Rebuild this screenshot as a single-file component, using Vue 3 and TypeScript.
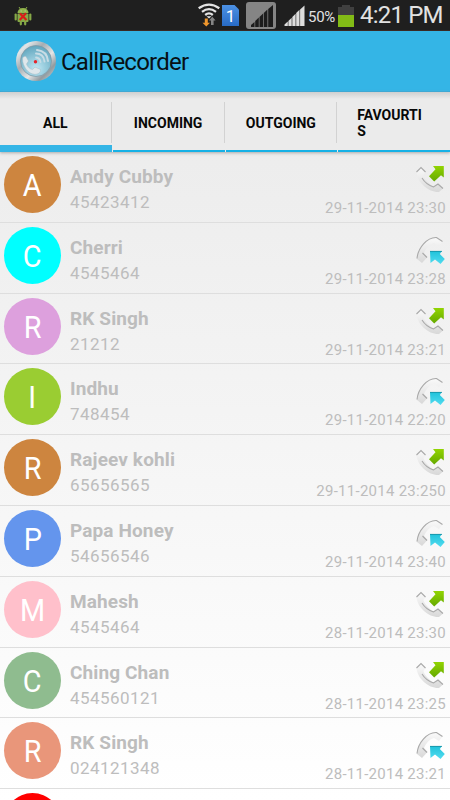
<script setup lang="ts">
interface Call {
  name: string
  phone: string
  date: string
  color: string
  outgoing: boolean
}

const tabs: string[] = ['ALL', 'INCOMING', 'OUTGOING', 'FAVOURTIS']

const calls: Call[] = [
  { name: 'Andy Cubby', phone: '45423412', date: '29-11-2014 23:30', color: '#cd853f', outgoing: true },
  { name: 'Cherri', phone: '4545464', date: '29-11-2014 23:28', color: '#00ffff', outgoing: false },
  { name: 'RK Singh', phone: '21212', date: '29-11-2014 23:21', color: '#dda0dd', outgoing: true },
  { name: 'Indhu', phone: '748454', date: '29-11-2014 22:20', color: '#9acd32', outgoing: false },
  { name: 'Rajeev kohli', phone: '65656565', date: '29-11-2014 23:250', color: '#cd853f', outgoing: true },
  { name: 'Papa Honey', phone: '54656546', date: '29-11-2014 23:40', color: '#6495ed', outgoing: false },
  { name: 'Mahesh', phone: '4545464', date: '28-11-2014 23:30', color: '#ffc0cb', outgoing: true },
  { name: 'Ching Chan', phone: '454560121', date: '28-11-2014 23:25', color: '#8fbc8f', outgoing: true },
  { name: 'RK Singh', phone: '024121348', date: '28-11-2014 23:21', color: '#e9967a', outgoing: false },
  { name: '', phone: '', date: '', color: '#ff0000', outgoing: true },
]
</script>

<template>
  <div class="screen">
    <svg width="0" height="0" class="defs">
      <defs>
        <linearGradient id="metal" x1="0" y1="0" x2="1" y2="1">
          <stop offset="0" stop-color="#85929a" /><stop offset=".18" stop-color="#e2e6e8" />
          <stop offset=".38" stop-color="#a5adb2" /><stop offset=".6" stop-color="#e5e5e5" />
          <stop offset=".78" stop-color="#919ba0" /><stop offset="1" stop-color="#dde1e3" />
        </linearGradient>
        <radialGradient id="glass" cx=".5" cy=".75" r=".75">
          <stop offset="0" stop-color="#c0e8f4" /><stop offset="1" stop-color="#60a5bd" />
        </radialGradient>
        <linearGradient id="phone" x1="0" y1="0" x2="0" y2="1">
          <stop offset="0" stop-color="#fafafa" /><stop offset="1" stop-color="#d8d8d8" />
        </linearGradient>
        <linearGradient id="green" x1="0" y1="0" x2="0" y2="1">
          <stop offset="0" stop-color="#92d402" /><stop offset="1" stop-color="#65a900" />
        </linearGradient>
        <linearGradient id="cyan" x1="0" y1="0" x2="0" y2="1">
          <stop offset="0" stop-color="#20c2da" /><stop offset="1" stop-color="#52dcf0" />
        </linearGradient>
        <linearGradient id="sim" x1="0" y1="0" x2="0" y2="1">
          <stop offset="0" stop-color="#4c91e4" /><stop offset="1" stop-color="#286bc5" />
        </linearGradient>
      </defs>
    </svg>

    <div class="status">
      <svg class="droid" width="18" height="20" viewBox="0 0 18 20">
        <path d="M5 1l2 3M13 1l-2 3" stroke="#86a948" stroke-width="1" />
        <path d="M3.5 7a5.5 5 0 0 1 11 0z" fill="#91b34c" />
        <rect x="3.5" y="7.5" width="11" height="8.5" rx="1" fill="#86a947" />
        <rect x=".6" y="7.5" width="2.2" height="7" rx="1.1" fill="#86a947" />
        <rect x="15.2" y="7.5" width="2.2" height="7" rx="1.1" fill="#86a947" />
        <path d="M6.8 15v3.3M11.2 15v3.3" stroke="#86a947" stroke-width="2.2" stroke-linecap="round" />
        <path d="M6.8 5h.6M10.8 5h.6" stroke="#eee" />
        <path d="M6 7.5l6.500 6.500M12 7.200L5.700 14" stroke="#d91d18" stroke-width="2.200" />
      </svg>
      <div class="tray">
        <svg width="108" height="30" viewBox="0 0 108 30">
          <g fill="none" stroke="#e4e4e4" stroke-width="2.300">
            <path d="M.7 8.200Q11 1 21.300 8.200" /><path d="M4 11.800Q11 6.500 18 11.800" /><path d="M7.200 15Q11 11.800 14.800 15" />
          </g>
          <path d="M8.500 16.200h5L11 18.500z" fill="#e4e4e4" />
          <path d="M6.800 18.500h3v4.200h2.200L8.300 26.500 4.500 22.700h2.300z" fill="#ee962d" />
          <path d="M13 25v-4.500h-2l3.300-3.700 3.300 3.700h-2V25z" fill="#858585" />
          <path d="M24 5h12.500L41 9.500V26H24z" fill="url(#sim)" />
          <text x="32.500" y="21.500" class="sim-text">1</text>
          <rect x="48" y="2" width="30" height="27" rx="3" fill="#858585" />
          <g fill="#1d1d1d">
            <path d="M53 27v-2l3.500-3v5z" /><path d="M57.200 27v-6l3.600-3.500V27z" /><path d="M61.500 27V17l3.600-3.500V27z" />
            <path d="M65.800 27V13l3.600-3.500V27z" /><path d="M70.200 27V9L75 5v22z" />
          </g>
          <g fill="#ddd">
            <path d="M86.500 26v-1.500l3.300-3V26z" /><path d="M90.400 26v-5l3.300-3.200V26z" /><path d="M94.300 26v-9l3.300-3.200V26z" />
            <path d="M98.200 26V13l3.300-3.200V26z" /><path d="M102.100 26V9.500l4.400-4V26z" />
          </g>
        </svg>
        <span class="percent">50%</span>
        <svg class="battery" width="16" height="24" viewBox="0 0 16 24">
          <path d="M4 1h8v2h4v9H0V3h4z" fill="#404040" /><path d="M0 11h16v12H0z" fill="#82bb16" />
        </svg>
        <span class="clock">4:21 PM</span>
      </div>
    </div>

    <header class="bar">
      <svg width="40" height="40" viewBox="0 0 40 40">
        <circle cx="20" cy="20" r="20" fill="url(#metal)" />
        <circle cx="20" cy="20" r="15.500" fill="url(#glass)" stroke="#8195a0" stroke-width=".7" />
        <path d="M6.500 18c0-2 2-3 3.500-2.500l2.500 4.500-2 3c1 3 3.500 5 6 5.500l2.500-2.500 5.500 2.500c.5 3-2.500 5-6 4.800C12 33 6.500 25 6.500 18z" fill="#dfe7eb" stroke="#a3bac5" stroke-width=".5" />
        <g fill="none" stroke="#c8dce5" stroke-linecap="round">
          <path d="M20 16.500q4 .5 4.500 4.500" stroke-width="1.800" /><path d="M20 12.500q7.500 0 8.500 8" stroke-width="2" /><path d="M21 9q10 1 11 11" stroke-width="2" />
        </g>
        <circle cx="19.500" cy="20.700" r="1.700" fill="#e5242c" />
      </svg>
      <h1>CallRecorder</h1>
    </header>

    <div class="content">
      <nav class="tabs">
        <div v-for="(tab, i) in tabs" :key="tab" class="tab" :class="{ active: i === 0 }">
          <span>{{ tab }}</span>
        </div>
      </nav>

      <div class="list">
        <div v-for="(call, i) in calls" :key="i" class="row">
          <div class="avatar" :style="{ backgroundColor: call.color }">
            <span>{{ call.name.charAt(0) }}</span>
          </div>
          <div class="who">
            <div class="name">{{ call.name }}</div>
            <div class="phone">{{ call.phone }}</div>
          </div>
          <div class="meta">
            <svg v-if="call.outgoing" width="30" height="30" viewBox="0 0 30 30">
              <path d="M.5 8L5 3.500l4.500 4.500-2 3c1 4 5.500 9 10 11.500l4.500-2.500 5 4.500-4 3.500C13 28.500 1.500 19 .5 8z" fill="url(#phone)" />
              <path d="M.5 8L5 3.500l4.500 4.500M6 14q4 6.500 11.500 9l4.500-3 5 4.500" fill="none" stroke="#a9a9a9" stroke-width="1.100" />
              <path d="M17 2h10.800v11.500l-2.800-2.200-6.800 6.200-5.200-5.300 6.500-7z" fill="url(#green)" />
            </svg>
            <svg v-else width="30" height="30" viewBox="0 0 30 30">
              <path d="M1 24C2 13 11 2 20.500 2.500l6 4-3.500 4.500-5-3C14 9 10 13 8 18l3.500 4-5.500 6z" fill="url(#phone)" />
              <path d="M1 23.500C2 13 11 2 20.500 2.500l6 4M6.500 18l4.500 4.500" fill="none" stroke="#a9a9a9" stroke-width="1.100" />
              <path d="M14 16h12l-2.200 3 5 5-4.300 5-5.500-4.500-4.500 3.500z" fill="url(#cyan)" />
              <path d="M14 16.400h12" stroke="#168ba0" stroke-width=".8" />
            </svg>
            <div class="date">{{ call.date }}</div>
          </div>
        </div>
      </div>
    </div>
  </div>
</template>

<style>
body {
  margin: 0;
  overflow: hidden;
}
</style>

<style scoped>
.screen {
  width: 450px;
  height: 800px;
  overflow: hidden;
  display: flex;
  flex-direction: column;
  font-family: Roboto, sans-serif;
}
.defs {
  position: absolute;
}
.status {
  height: 31px;
  flex: none;
  box-sizing: border-box;
  background: #1f1f1f;
  border-bottom: 1px solid #392a24;
  display: flex;
  justify-content: space-between;
  padding: 0 0 0 14px;
  color: #e2e2e2;
}
.droid {
  margin-top: 6px;
}
.tray {
  display: flex;
  align-items: center;
  width: 252px;
}
.tray > * {
  flex: none;
}
.sim-text {
  font: 17px Roboto, sans-serif;
  fill: #fff;
  text-anchor: middle;
}
.percent {
  font-size: 15px;
  width: 28px;
  margin-left: 2px;
  letter-spacing: -0.3px;
  padding-top: 3px;
}
.battery {
  margin: 1px 6px 0 2px;
}
.clock {
  font-size: 24px;
  line-height: 30px;
  letter-spacing: -0.8px;
  white-space: nowrap;
}
.bar {
  height: 61px;
  flex: none;
  box-sizing: border-box;
  background: #34b5e6;
  border-bottom: 1px solid #2aa9dc;
  display: flex;
  align-items: center;
  padding-left: 16px;
}
h1 {
  margin: 2px 0 0 5px;
  font-size: 24px;
  letter-spacing: -0.75px;
  font-weight: 400;
  color: #071014;
}
.content {
  flex: 1;
  min-height: 0;
  background: linear-gradient(#ebebeb, #fff);
}
.tabs {
  height: 60px;
  display: grid;
  grid-template-columns: repeat(4, 1fr);
  gap: 1px;
  background: linear-gradient(#d0d0d0, #ebebeb 7px);
  box-shadow: 0 1px 3px #aaa;
}
.tab {
  box-sizing: border-box;
  display: flex;
  align-items: center;
  justify-content: center;
  border-bottom: 2px solid #16b1e6;
  padding: 3px 20px 0;
  font-size: 14px;
  line-height: 16px;
  font-weight: 700;
  color: #080808;
  background: linear-gradient(#d2d2d2, #d2d2d2) right 10px / 1px 41px no-repeat;
}
.tab:last-child {
  background: none;
}
.tab span {
  word-break: break-all;
  margin-left: -1px;
}
.tab.active {
  border-bottom: 7px solid #34b5e6;
  padding-top: 8px;
}
.row {
  height: 70.800px;
  box-sizing: border-box;
  border-bottom: 1px solid #dedede;
  display: flex;
  padding: 4px 4px 0;
}
.avatar {
  flex: none;
  width: 57px;
  height: 57px;
  border-radius: 50%;
  color: #fff;
  font-size: 31px;
  line-height: 60px;
  text-align: center;
}
.avatar span {
  display: inline-block;
  transform: scaleX(0.93);
}
.who {
  flex: 1;
  margin-left: 9px;
  padding-top: 8px;
  color: #bdbdbd;
}
.name {
  height: 26px;
  font-size: 19px;
  line-height: 25px;
  font-weight: 700;
  letter-spacing: 0.12px;
}
.phone {
  font-size: 17px;
  line-height: 24px;
  letter-spacing: 0.450px;
}
.meta {
  display: flex;
  flex-direction: column;
  align-items: flex-end;
  padding-top: 8px;
  color: #bdbdbd;
}
.date {
  font-size: 15px;
  line-height: 20px;
  letter-spacing: 0.260px;
  margin-top: 4px;
}
</style>
